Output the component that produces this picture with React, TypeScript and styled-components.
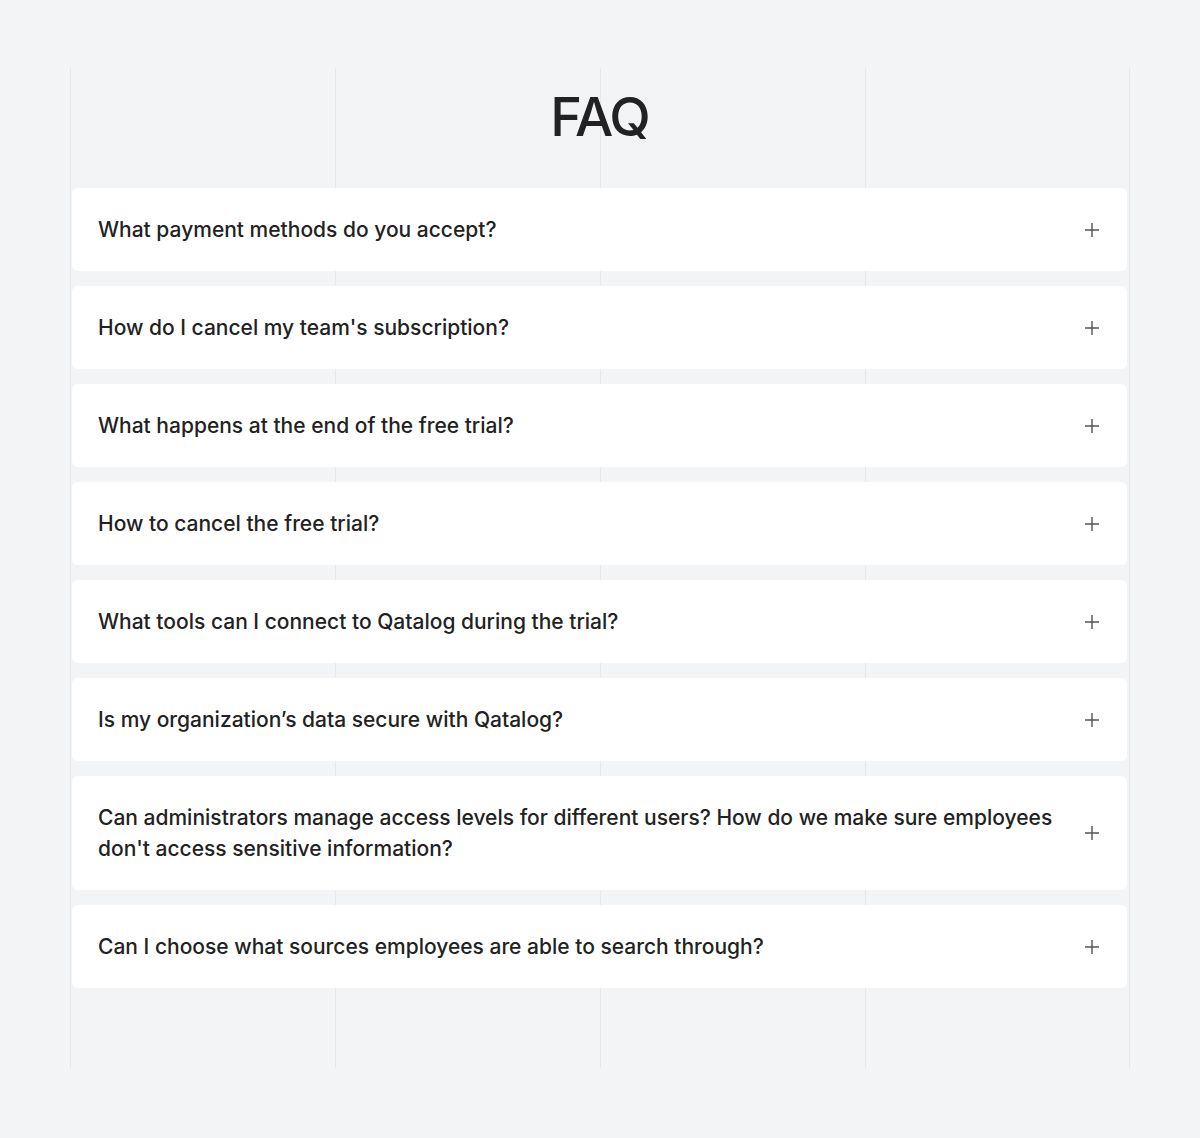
import React from 'react'
import styled, { createGlobalStyle } from 'styled-components'

const GlobalStyle = createGlobalStyle`
  html, body {
    margin: 0;
    padding: 0;
    background: #f3f4f6;
  }
  body {
    font-family: Inter, 'Noto Sans', 'Liberation Sans', sans-serif;
    color: #222222;
  }
`

const Page = styled.div`
  width: 1200px;
  height: 1138px;
  padding-top: 68px;
  box-sizing: border-box;
  background: #f3f4f6;
`

// column grid lines drawn as background of the section
const Section = styled.section`
  width: 1060px;
  height: 1000px;
  margin: 0 auto;
  box-sizing: border-box;
  padding: 20px 2px 0 2px;
  background-image: linear-gradient(to right, #e6e7ea 0, #e6e7ea 1px, transparent 1px);
  background-size: 265px 100%;
  background-repeat: repeat-x;
  border-right: 1px solid #e6e7ea;
`

const Title = styled.h1`
  margin: 0 0 42px 0;
  text-align: center;
  font-size: 54px;
  line-height: 58px;
  font-weight: 500;
  letter-spacing: -2px;
  color: #222222;
`

const List = styled.div`
  display: flex;
  flex-direction: column;
  gap: 15px;
`

const Item = styled.div`
  display: flex;
  align-items: center;
  justify-content: space-between;
  gap: 24px;
  background: #ffffff;
  border-radius: 6px;
  padding: 26px 27px 26px 26px;
`

const Question = styled.span`
  font-size: 21px;
  line-height: 31px;
  font-weight: 500;
  letter-spacing: 0;
  color: #222222;
  max-width: 960px;
`

const PlusIcon = () => (
  <svg width="16" height="16" viewBox="0 0 16 16" style={{ flexShrink: 0 }}>
    <path d="M8 1v14M1 8h14" stroke="#555555" strokeWidth="1.4" fill="none" />
  </svg>
)

const questions = [
  'What payment methods do you accept?',
  "How do I cancel my team's subscription?",
  'What happens at the end of the free trial?',
  'How to cancel the free trial?',
  'What tools can I connect to Qatalog during the trial?',
  'Is my organization’s data secure with Qatalog?',
  "Can administrators manage access levels for different users? How do we make sure employees don't access sensitive information?",
  'Can I choose what sources employees are able to search through?',
]

export default function App() {
  return (
    <Page>
      <GlobalStyle />
      <Section>
        <Title>FAQ</Title>
        <List>
          {questions.map((q) => (
            <Item key={q}>
              <Question>{q}</Question>
              <PlusIcon />
            </Item>
          ))}
        </List>
      </Section>
    </Page>
  )
}
